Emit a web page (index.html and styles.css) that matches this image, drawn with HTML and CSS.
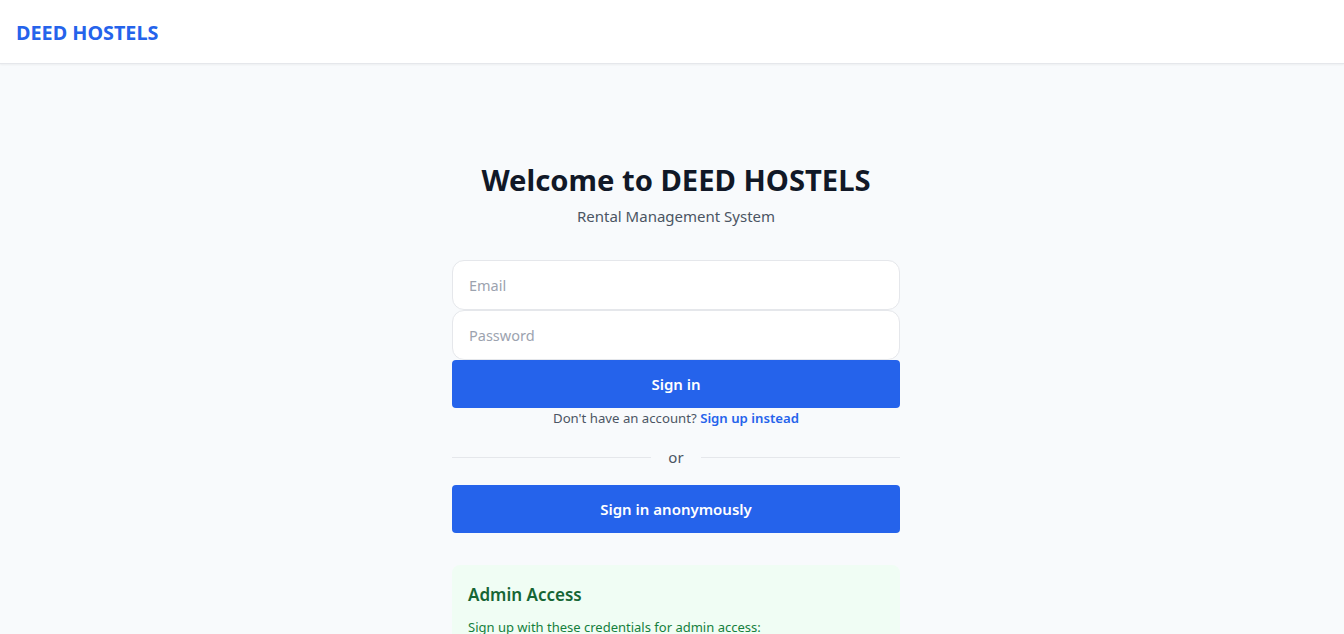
FILE: index.html
```html
<!DOCTYPE html>
<html lang="en">
<head>
<meta charset="utf-8">
<title>DEED HOSTELS</title>
<link rel="stylesheet" href="styles.css">
</head>
<body>
<header class="topbar">
  <span class="brand">DEED HOSTELS</span>
</header>
<main class="main">
  <div class="panel">
    <div class="intro">
      <h1 class="title">Welcome to DEED HOSTELS</h1>
      <p class="subtitle">Rental Management System</p>
    </div>
    <form class="form">
      <input class="field" type="email" placeholder="Email">
      <input class="field" type="password" placeholder="Password">
      <button class="btn" type="button">Sign in</button>
      <p class="switch">Don't have an account? <a class="link" href="#">Sign up instead</a></p>
    </form>
    <div class="divider"><span class="line"></span><span class="or">or</span><span class="line"></span></div>
    <button class="btn" type="button">Sign in anonymously</button>
    <section class="admin">
      <h2 class="admin-title">Admin Access</h2>
      <p class="admin-text">Sign up with these credentials for admin access:</p>
    </section>
  </div>
</main>
</body>
</html>
```

FILE: styles.css
```css
* { box-sizing: border-box; }
html, body { margin: 0; padding: 0; }
body {
  font-family: "Noto Sans", "Open Sans", sans-serif;
  background: #f8fafc;
  color: #111827;
  height: 634px;
  overflow: hidden;
}
.topbar {
  height: 64px;
  background: #ffffff;
  border-bottom: 1px solid #e5e7eb;
  box-shadow: 0 1px 2px rgba(0,0,0,0.05);
  display: flex;
  align-items: center;
  padding: 2px 16px 0;
}
.brand {
  color: #2563eb;
  font-weight: 700;
  font-size: 19.8px;
}
.main {
  display: flex;
  justify-content: center;
  padding: 98px 0 0 8px;
}
.panel {
  width: 448px;
  display: flex;
  flex-direction: column;
}
.intro { text-align: center; margin-bottom: 32px; }
.title {
  margin: 0;
  font-size: 29.2px;
  line-height: 36px;
  font-weight: 700;
  color: #111827;
}
.subtitle {
  margin: 6px 0 0;
  font-size: 15px;
  line-height: 24px;
  color: #4b5563;
}
.form { display: flex; flex-direction: column; }
.field {
  height: 50px;
  border: 1px solid #e5e7eb;
  border-radius: 12px;
  background: #fff;
  padding: 0 16px;
  font: inherit;
  font-size: 14.5px;
  color: #111827;
  outline: none;
}
.field::placeholder { color: #9ca3af; }
.btn {
  height: 48px;
  border: none;
  border-radius: 4px;
  background: #2563eb;
  color: #fff;
  font: inherit;
  font-size: 15px;
  font-weight: 600;
}
.switch {
  margin: 0;
  text-align: center;
  font-size: 13.2px;
  line-height: 20px;
  color: #4b5563;
}
.link { color: #2563eb; font-weight: 600; text-decoration: none; }
.divider {
  display: flex;
  align-items: center;
  gap: 17px;
  margin: 17px 0 16px;
}
.line { flex: 1; height: 1px; background: #e5e7eb; }
.or { color: #4b5563; font-size: 15px; line-height: 24px; }
.admin {
  margin-top: 32px;
  background: #f0fdf4;
  border-radius: 8px;
  padding: 16px;
}
.admin-title {
  margin: 0 0 8px;
  font-size: 17px;
  line-height: 28px;
  font-weight: 600;
  color: #166534;
}
.admin-text {
  margin: 0;
  font-size: 13px;
  line-height: 20px;
  color: #15803d;
}
```
